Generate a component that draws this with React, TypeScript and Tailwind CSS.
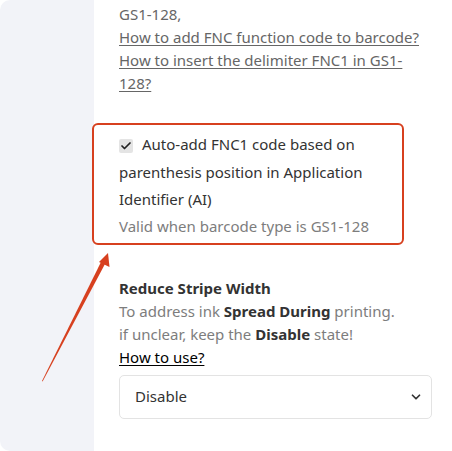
import React from "react";
import { ChevronDown, Check } from "lucide-react";

export default function App() {
  return (
    <div
      className="relative flex h-[451px] w-[452px] overflow-hidden bg-white text-[15px]"
      style={{ fontFamily: '"Noto Sans", "Open Sans", sans-serif' }}
    >
      {/* Side rail */}
      <aside className="h-full w-[94px] shrink-0 rounded-l-[10px] bg-[#f2f3f8]" />

      {/* Content */}
      <main className="flex w-[338px] flex-col pl-[25px] pt-[3px]">
        <div className="leading-[23px] text-[#666]">
          <p>GS1-128,</p>
          <a className="block underline underline-offset-2">How to add FNC function code to barcode?</a>
          <a className="block underline underline-offset-2">How to insert the delimiter FNC1 in GS1-128?</a>
        </div>

        {/* Highlighted option */}
        <div className="-ml-[27px] mt-[28px] w-[312px] rounded-[6px] border-2 border-[#d7401f] pb-[5px] pl-[25px] pr-3 pt-[6px]">
          <p className="leading-[27.5px] text-[#333]">
            <span className="mr-[9px] inline-flex h-[14px] w-[14px] translate-y-[1px] items-center justify-center rounded-[2px] bg-[#e4e4e4] align-[-1px] text-[#222]">
              <Check size={12} strokeWidth={3.5} />
            </span>
            Auto-add FNC1 code based on parenthesis position in Application Identifier (AI)
          </p>
          <p className="leading-[24px] text-[#7d7d7d]">Valid when barcode type is GS1-128</p>
        </div>

        {/* Stripe width */}
        <div className="mt-[32px] leading-[23px]">
          <h3 className="font-bold text-[#333]">Reduce Stripe Width</h3>
          <p className="text-[#7d7d7d]">
            To address ink <b className="text-[#333]">Spread During</b> printing.
          </p>
          <p className="text-[#7d7d7d]">
            if unclear, keep the <b className="text-[#333]">Disable</b> state!
          </p>
          <a className="text-black underline underline-offset-2">How to use?</a>
        </div>

        <div className="mt-[6px] flex h-[44px] w-[313px] items-center justify-between rounded-[5px] border border-[#e3e3e3] pl-[15px] pr-[8px] text-[#333]">
          <span>Disable</span>
          <ChevronDown size={14} strokeWidth={3} />
        </div>
      </main>

      {/* Annotation arrow */}
      <svg className="pointer-events-none absolute left-0 top-0" width="452" height="451">
        <polygon points="42,381 42.6,381.4 105.5,263 101.5,261" fill="#d7401f" />
        <polygon points="108,253 109.5,267 99,262" fill="#d7401f" />
      </svg>
    </div>
  );
}
